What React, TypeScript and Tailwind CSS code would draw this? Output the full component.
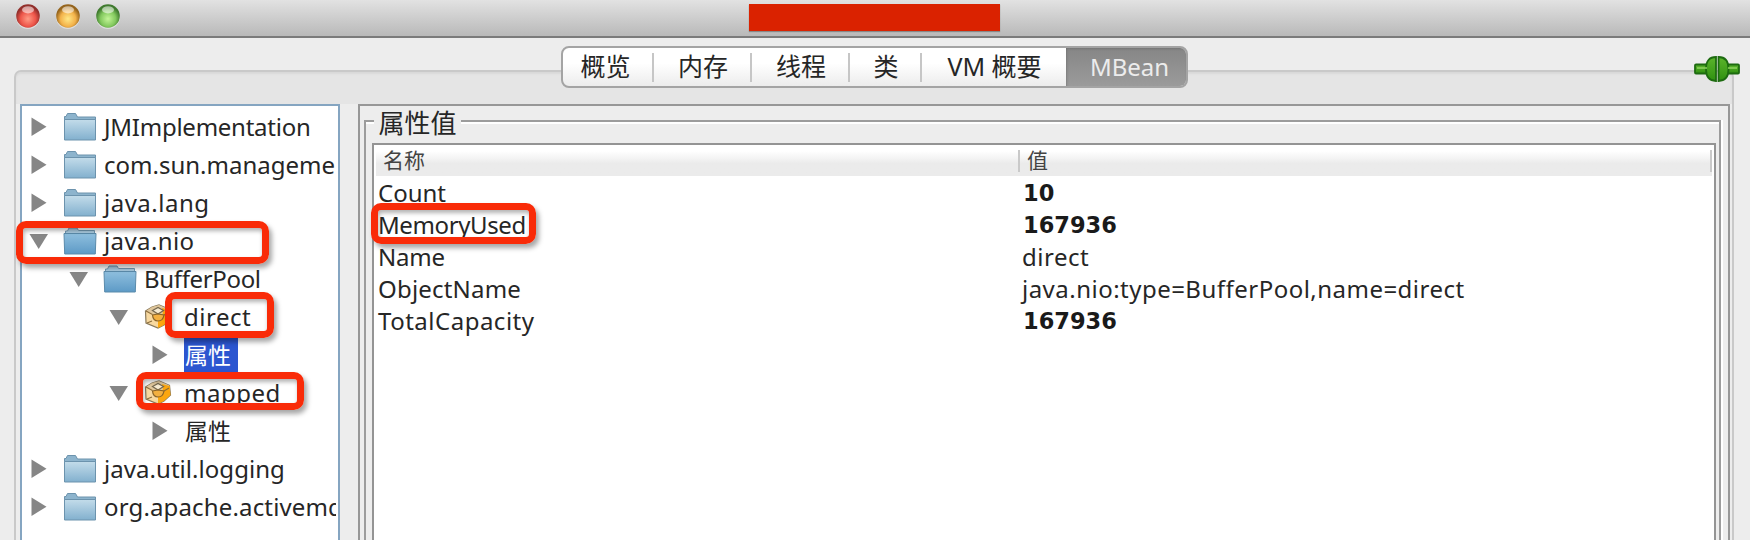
import React from "react";

const Light = ({ c, e, h }: { c: string; e: string; h: string }) => (
  <svg className="h-[26px] w-[26px] shrink-0" viewBox="0 0 26 26">
    <defs>
      <radialGradient id={"g" + c.slice(1)} cx="50%" cy="62%" r="52%">
        <stop offset="0" stopColor={h} />
        <stop offset=".62" stopColor={c} />
        <stop offset="1" stopColor={e} />
      </radialGradient>
    </defs>
    <circle cx="13" cy="14" r="12" fill="#fff" opacity=".45" />
    <circle cx="13" cy="13" r="11.8" fill={`url(#g${c.slice(1)})`} />
    <ellipse cx="13" cy="6.8" rx="6" ry="3.6" fill="#fff" opacity=".55" />
  </svg>
);

const Folder = ({ open }: { open?: boolean }) => (
  <svg className="h-[30px] w-[34px] shrink-0" viewBox="0 0 34 30">
    <defs>
      <linearGradient id="fc" x1="0" y1="0" x2="0" y2="1">
        <stop offset="0" stopColor="#c3dcea" />
        <stop offset="1" stopColor="#82b0ce" />
      </linearGradient>
      <linearGradient id="fo" x1="0" y1="0" x2="0" y2="1">
        <stop offset="0" stopColor="#8fbfde" />
        <stop offset="1" stopColor="#5d9ac6" />
      </linearGradient>
    </defs>
    {open ? (
      <>
        <path d="M2.500 10V5H4.500L6 2H14L15.500 4.500H31.500V10Z" fill="#a9cbe0" stroke="#7399b2" />
        <path d="M1 7.500H33L32.300 28H1.700Z" fill="url(#fo)" stroke="#5b8bab" />
      </>
    ) : (
      <>
        <path d="M1.500 12V4.500H3L4.500 1.500H12.500L14.500 5H32.500V12Z" fill="#8db4cd" stroke="#6c93ad" />
        <path d="M1.500 7.500H32.500V28H1.500Z" fill="url(#fc)" stroke="#6c93ad" />
      </>
    )}
  </svg>
);

const Bean = () => (
  <svg className="h-[26px] w-[28px] shrink-0" viewBox="0 0 28 26">
    <path d="M1.500 7L8 3L15 1L25.500 5.500L26.500 15L20 21L14 24L2 19Z" fill="#f8d9a0" stroke="#8a7a5c" strokeWidth="1.200" />
    <path d="M14 12L25.500 5.500L26.500 15L20 21L14 24Z" fill="#fba60f" />
    <path d="M2 7L8 3L15 1L25.500 5.500L14 12Z" fill="#e0c79c" />
    <path d="M18 4L25.500 6L26 14L20 16Z" fill="#fba60f" />
    <path d="M8.500 6.500L14 3.500L19.500 6.500L14 10Z" fill="#f6ead0" stroke="#75684f" strokeWidth="1.200" />
    <path d="M8.500 11Q9 17 14 17T20 11L14 10Z" fill="#f3b040" stroke="#8a6428" strokeWidth="1.200" />
    <path d="M2 7L8.500 10.500M8 17L3 19M20 11L25 8" fill="none" stroke="#8c6d3b" strokeWidth="1.100" />
  </svg>
);

const Arrow = ({ open }: { open?: boolean }) => (
  <svg className="h-[20px] w-[20px] shrink-0" viewBox="0 0 20 20">
    <path d={open ? "M0.500 3H19L9.700 18Z" : "M2.500 .5L17.500 9.700L2.500 19Z"} fill="#868686" />
  </svg>
);

type Row = { t: string; pad: string; open?: boolean; kind: "folder" | "bean" | "none"; sel?: boolean; tr: string };
const rows: Row[] = [
  { t: "JMImplementation", pad: "pl-[7px]", kind: "folder", tr: "tracking-[-0.25px]" },
  { t: "com.sun.manageme", pad: "pl-[7px]", kind: "folder", tr: "tracking-[0px]" },
  { t: "java.lang", pad: "pl-[7px]", kind: "folder", tr: "tracking-[0.5px]" },
  { t: "java.nio", pad: "pl-[7px]", kind: "folder", open: true, tr: "tracking-[0.4px]" },
  { t: "BufferPool", pad: "pl-[47px]", kind: "folder", open: true, tr: "tracking-[-0.35px]" },
  { t: "direct", pad: "pl-[87px]", kind: "bean", open: true, tr: "tracking-[0.5px]" },
  { t: "属性", pad: "pl-[126px]", kind: "none", sel: true, tr: "text-[23px]" },
  { t: "mapped", pad: "pl-[87px]", kind: "bean", open: true, tr: "tracking-[0.5px]" },
  { t: "属性", pad: "pl-[126px]", kind: "none", tr: "text-[23px]" },
  { t: "java.util.logging", pad: "pl-[7px]", kind: "folder", tr: "tracking-[0.05px]" },
  { t: "org.apache.activemq", pad: "pl-[7px]", kind: "folder", tr: "tracking-[0.15px]" },
];

const BOLD = "pl-px pt-[2px] font-['DejaVu_Sans',sans-serif] font-bold text-[22.500px] text-[#1a1a1a]";
const attrs = [
  ["Count", "10", BOLD, "tracking-[0px]"],
  ["MemoryUsed", "167936", BOLD, "tracking-[-0.4px]"],
  ["Name", "direct", "tracking-[0.5px]", "tracking-[-0.2px]"],
  ["ObjectName", "java.nio:type=BufferPool,name=direct", "tracking-[0.48px]", "tracking-[0.2px]"],
  ["TotalCapacity", "167936", BOLD, "tracking-[0.5px]"],
] as const;

const tabs = [
  { t: "概览", w: "w-[91px] pr-[6px]" },
  { t: "内存", w: "w-[98px]" },
  { t: "线程", w: "w-[98px]" },
  { t: "类", w: "w-[72px]" },
  { t: "VM 概要", w: "w-[144px] pl-px" },
];

const Mark = ({ c }: { c: string }) => (
  <div className={"absolute rounded-[10px] border-[7px] border-[#f92b08] shadow-[3px_4px_5px_rgba(0,0,0,0.35),inset_1px_3px_4px_rgba(0,0,0,0.3)] " + c} />
);

export default function App() {
  return (
    <div className="relative flex h-[540px] w-[1750px] flex-col overflow-hidden bg-[#ededed] font-['Noto_Sans','Noto_Sans_CJK_SC',sans-serif] text-[24px] text-[#262626]">
      <header className="flex h-[38px] shrink-0 border-b-2 border-[#7b7b7b] bg-linear-to-b from-[#e2e2e2] to-[#b9b9b9]">
        <div className="flex gap-[14px] pl-[15px] pt-[3px]">
          <Light c="#ee5549" e="#922f2b" h="#ff9b85" />
          <Light c="#f3b24a" e="#95641c" h="#ffe887" />
          <Light c="#83c95e" e="#3f7a2e" h="#c3f598" />
        </div>
        <div className="ml-[628px] mt-[4px] h-[27px] w-[251px] bg-[#da2200] shadow-[0_1px_1px_#888]" />
      </header>
      <main className="mx-[14px] mt-[32px] flex h-[490px] w-[1720px] shrink-0 flex-col rounded-t-[7px] border-2 border-b-0 border-[#c9c9c9] bg-[#e5e5e5] shadow-[inset_0_2px_2px_#d9d9d9]">
        <div className="h-[32px] shrink-0" />
        <div className="flex min-h-0 flex-1 bg-[#ededed] pl-[4px]">
          <aside className="w-[320px] shrink-0 overflow-hidden border-2 border-b-0 border-[#85a5c1] bg-white pr-[2px] pt-[2px]">
            <div className="overflow-hidden">
              {rows.map((r, i) => (
                <div key={i} className={"flex h-[38px] items-center whitespace-nowrap " + r.pad}>
                  <div className={r.kind === "none" ? "ml-[2px] flex" : "flex"}>
                    <Arrow open={r.open} />
                  </div>
                  {r.kind === "folder" && <div className="ml-[14px] mr-[7px] flex"><Folder open={r.open} /></div>}
                  {r.kind === "bean" && <div className="ml-[15px] mr-[12px] flex"><Bean /></div>}
                  <span className={r.tr + (r.sel ? " ml-[14px] flex h-[34px] w-[54px] items-center bg-[#2c56d0] pl-px text-white" : r.kind === "none" ? " ml-[15px]" : "")}>{r.t}</span>
                </div>
              ))}
            </div>
          </aside>
          <section className="ml-[18px] flex w-[1372px] shrink-0 flex-col border-2 border-b-0 border-[#979797]">
            <div className="ml-[4px] mt-[14px] flex w-[1357px] flex-1 flex-col border-2 border-b-0 border-[#9c9c9c] shadow-[inset_0_2px_0_#fff,2px_0_0_#fff]">
              <div className="-mt-[14px] ml-[8px] flex h-[35px] w-[87px] shrink-0 items-center justify-center bg-[#ededed] pb-[5px] text-[26px]">属性值</div>
              <div className="ml-[6px] flex w-[1344px] flex-1 flex-col border-2 border-b-0 border-[#949494] bg-white">
                <div className="mx-[2px] flex h-[31px] shrink-0 items-center bg-linear-to-b from-white from-20% via-[#ebebeb] via-60% to-[#ebebeb] text-[21px] text-[#444]">
                  <div className="flex h-[22px] w-[644px] items-center border-r-2 border-[#c9c9c9] pl-[7px]">名称</div>
                  <div className="flex h-[22px] flex-1 items-center border-r-2 border-[#c9c9c9] pl-[7px]">值</div>
                </div>
                <div className="pt-px">
                  {attrs.map(([n, v, vc, nc]) => (
                    <div key={n} className="flex h-[32px] items-center">
                      <span className={"w-[648px] pl-[4px] " + nc}>{n}</span>
                      <span className={vc}>{v}</span>
                    </div>
                  ))}
                </div>
              </div>
            </div>
          </section>
        </div>
      </main>

      <nav className="absolute left-[561px] top-[46px] flex h-[42px] w-[627px] overflow-hidden rounded-[8px] border-2 border-[#a4a4a4] bg-linear-to-b from-white from-40% to-[#ececec] text-[25px]">
        {tabs.map((x, i) => (
          <div key={x.t} className="flex shrink-0 items-center">
            <div className={"whitespace-nowrap text-center " + x.w}>{x.t}</div>
            {i < 4 && <div className="-ml-[2px] h-[29px] w-[2px] bg-[#c6c6c6]" />}
          </div>
        ))}
        <div className="-my-[2px] -mr-[2px] flex flex-1 items-center justify-center bg-linear-to-b from-[#858585] to-[#9c9c9c] pl-[5px] text-[24px] text-[#ececec] shadow-[inset_0_2px_3px_#666]">MBean</div>
      </nav>

      <svg className="absolute left-[1692px] top-[54px] h-[30px] w-[50px]" viewBox="0 0 50 30">
        <defs>
          <linearGradient id="plug" x1="0" y1="0" x2="0" y2="1">
            <stop offset="0" stopColor="#5cb52c" />
            <stop offset="1" stopColor="#2f9010" />
          </linearGradient>
        </defs>
        <g fill="url(#plug)" stroke="#1d6b10" strokeWidth="1.800">
          <rect x="3" y="10.500" width="13" height="9" rx="1" />
          <rect x="34" y="10.500" width="13" height="9" rx="1" />
          <path d="M24 3Q14 3 14 15T24 27Z M26.500 3Q36.500 3 36.500 15T26.500 27Z" />
        </g>
        <path d="M5 14H15M36 14H45" stroke="#8fd45f" strokeWidth="1.500" />
      </svg>

      <Mark c="left-[16px] top-[221px] h-[43px] w-[253px]" />
      <Mark c="left-[165px] top-[292px] h-[46px] w-[109px]" />
      <Mark c="left-[136px] top-[372px] h-[38px] w-[168px]" />
      <Mark c="left-[371px] top-[203px] h-[41px] w-[165px]" />
    </div>
  );
}
